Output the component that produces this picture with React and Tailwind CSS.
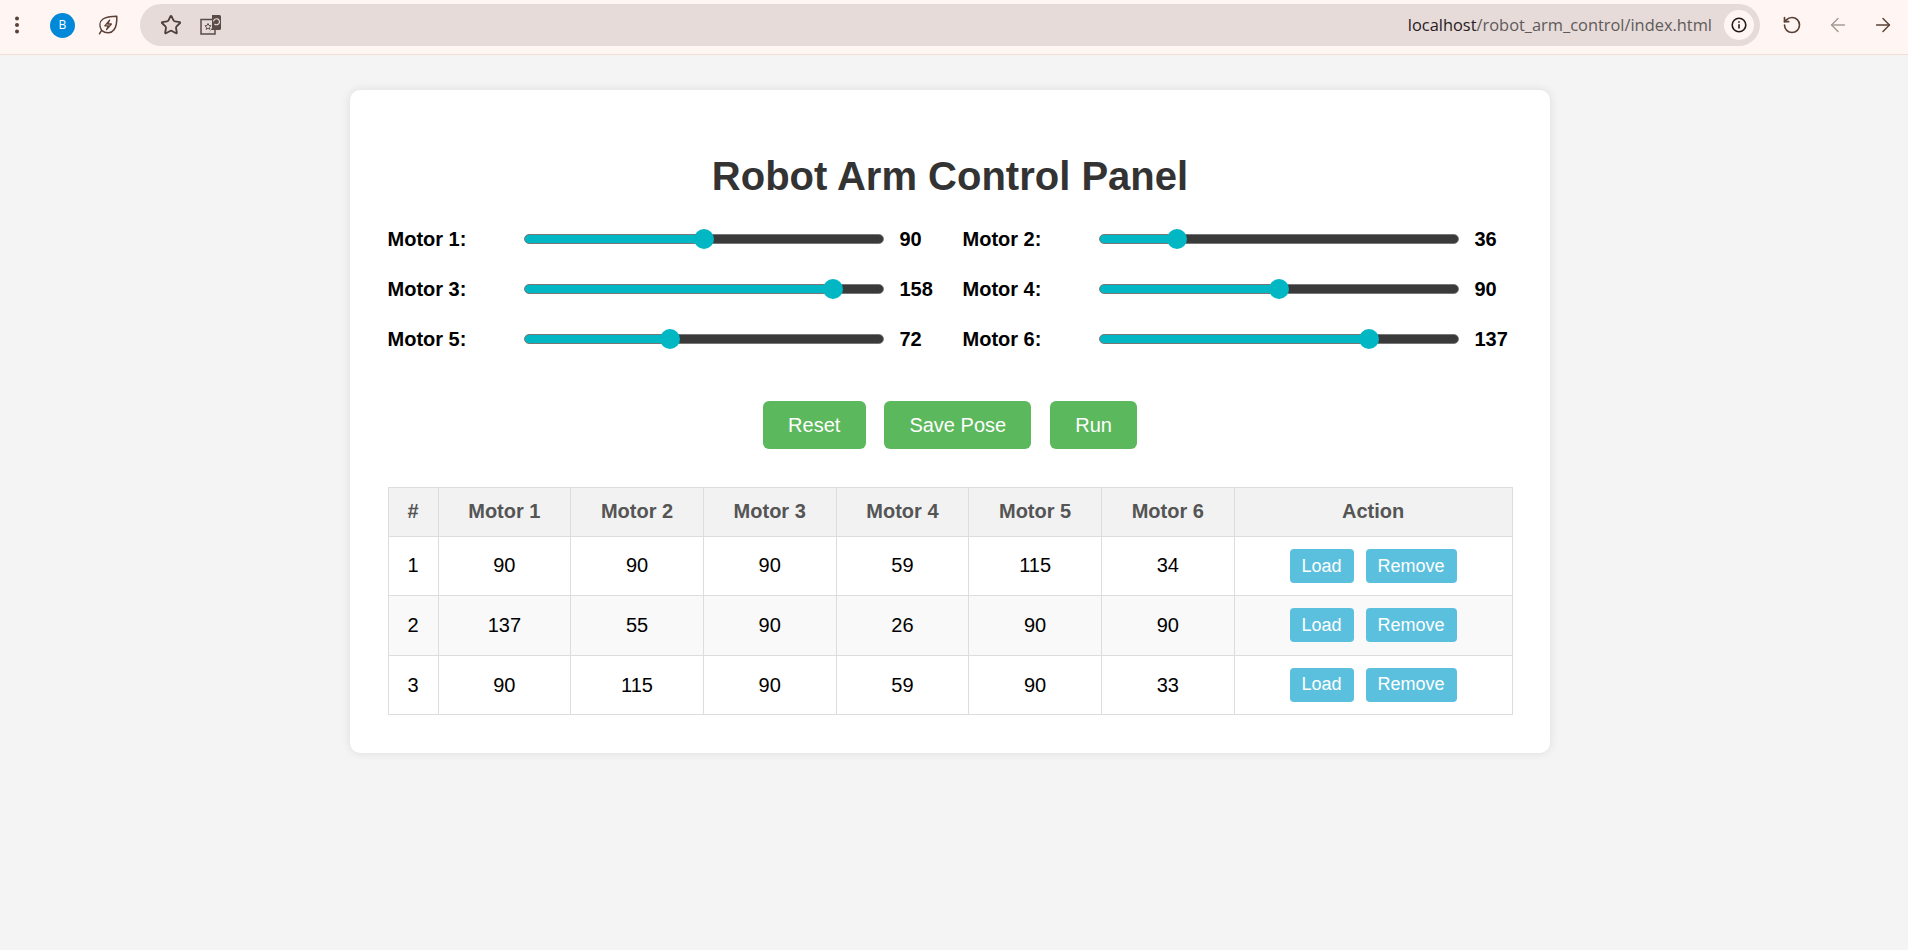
import React from 'react';
import { ArrowLeft, ArrowRight, RotateCcw, Star } from 'lucide-react';

const motors = [
  { id: 1, value: 90, pos: 90 },
  { id: 2, value: 36, pos: 36 },
  { id: 3, value: 158, pos: 159 },
  { id: 4, value: 90, pos: 90 },
  { id: 5, value: 72, pos: 72 },
  { id: 6, value: 137, pos: 138 },
];

const poses = [
  [90, 90, 90, 59, 115, 34],
  [137, 55, 90, 26, 90, 90],
  [90, 115, 90, 59, 90, 33],
];

const MotorRow = ({ id, value, pos }) => {
  const thumb = 10 + (pos / 180) * 338;
  return (
    <div className="flex items-center h-[20px] text-[20px] font-bold text-black">
      <label className="w-[136px] shrink-0">Motor {id}:</label>
      <input
        type="range"
        min="0"
        max="180"
        defaultValue={pos}
        style={{ background: `linear-gradient(to right, #00b7c3 ${thumb}px, #3a3a3a ${thumb}px)` }}
        className="w-[360px] h-[10px] shrink-0 appearance-none rounded-[5px] border border-[#777777] [&::-webkit-slider-thumb]:appearance-none [&::-webkit-slider-thumb]:w-[20px] [&::-webkit-slider-thumb]:h-[20px] [&::-webkit-slider-thumb]:rounded-full [&::-webkit-slider-thumb]:bg-[#00b7c3]"
      />
      <span className="ml-[16px]">{value}</span>
    </div>
  );
};

const Toolbar = () => (
  <div className="h-[55px] pb-[4px] shrink-0 flex items-center bg-[#fff6f3] border-b border-[#f6ddd3] text-[#5b4035]">
    <div className="w-[140px] flex items-center shrink-0">
      <svg width="6" height="20" viewBox="0 0 6 20" className="ml-[14px]" fill="currentColor">
        <circle cx="3" cy="3.5" r="2" />
        <circle cx="3" cy="10" r="2" />
        <circle cx="3" cy="16.5" r="2" />
      </svg>
      <div className="ml-[30px] w-[25px] h-[25px] rounded-full bg-[#0288d8] text-white text-[12px] flex items-center justify-center font-['Open_Sans',sans-serif]">
        B
      </div>
      <svg width="20" height="20" viewBox="0 0 20 20" fill="none" stroke="currentColor" strokeWidth="1.5" className="ml-[23px]">
        <path d="M1.5 18.8 3.6 15.4C1 11 1.5 6.5 5 4 8.5 1.5 13 1.2 18.8 1.2 19 7 18.4 11.5 16 14.8 13.2 18.5 8 19 3.6 15.4" strokeLinejoin="round" strokeLinecap="round" />
        <path d="M11.6 5.2 6.8 10.8h3.6L8.6 14.6 13.4 9h-3.6z" strokeLinejoin="round" strokeWidth="1.3" />
      </svg>
    </div>
    <div className="flex-1 h-[42px] rounded-full bg-[#e6dbd9] flex items-center">
      <Star size={22} strokeWidth={2} className="ml-[20px] text-[#4e3f3a]" />
      <svg width="22" height="22" viewBox="0 0 22 22" className="ml-[18px]">
        <rect x="1" y="5.5" width="14" height="14.5" fill="none" stroke="#5b4b46" strokeWidth="1.5" />
        <path d="M12 1h7.5A1.5 1.5 0 0 1 21 2.5v12a1.5 1.5 0 0 1-1.5 1.5H11L8 20l4-6z" fill="#5b4b46" />
        <path d="M13.5 7.5a3 3 0 1 1 1 2.5" fill="none" stroke="#e6dbd9" strokeWidth="1.2" />
        <path d="M8 9.5l1 2 2 .3-1.5 1.5.3 2-1.8-1-1.8 1 .3-2L5 11.8l2-.3z" fill="none" stroke="#5b4b46" strokeWidth="1" />
      </svg>
      <div className="ml-auto text-[16.4px] text-[#5f5a5a] font-['Open_Sans',sans-serif]">
        <span className="text-[#27201e]">localhost</span>/robot_arm_control/index.html
      </div>
      <div className="ml-[12px] mr-[6px] w-[30px] h-[30px] rounded-full bg-[#fff6f3] flex items-center justify-center">
        <svg width="18" height="18" viewBox="0 0 18 18" fill="none" stroke="#201a18" strokeWidth="1.6">
          <circle cx="9" cy="9" r="6.8" />
          <path d="M9 8.2v4.2M9 5.2v1.6" />
        </svg>
      </div>
    </div>
    <div className="w-[148px] shrink-0 flex items-center">
      <RotateCcw size={20} strokeWidth={2} className="ml-[22px]" />
      <ArrowLeft size={22} strokeWidth={1.6} className="ml-[25px] text-[#a89a94]" />
      <ArrowRight size={22} strokeWidth={1.6} className="ml-[23px]" />
    </div>
  </div>
);

const App = () => {
  return (
    <div className="min-h-[950px] flex flex-col bg-[#f4f4f4] font-['Liberation_Sans',Arial,sans-serif]">
      <Toolbar />
      <div className="pt-[35px] pl-[350px]">
        <div className="w-[1200px] h-[663px] px-[37.5px] pt-[63px] bg-white rounded-[10px] shadow-[0_0_10px_rgba(0,0,0,0.1)]">
          <h1 className="text-[40px] leading-[46px] font-bold text-[#333333] text-center">Robot Arm Control Panel</h1>

          <div className="mt-[30px] grid grid-cols-2 gap-x-[25px] gap-y-[30px]">
            {motors.map((m) => (
              <MotorRow key={m.id} id={m.id} value={m.value} pos={m.pos} />
            ))}
          </div>

          <div className="mt-[52px] flex justify-center gap-[18.5px]">
            {['Reset', 'Save Pose', 'Run'].map((label) => (
              <button key={label} className="h-[48px] px-[25.3px] rounded-[6px] bg-[#5cb85c] text-white text-[20px]">
                {label}
              </button>
            ))}
          </div>

          <table className="mt-[38px] w-[1125px] table-fixed border-collapse text-[20px] text-black text-center">
            <thead>
              <tr className="h-[49px] bg-[#f2f2f2] text-[#555555]">
                <th className="w-[50px] pb-[2px] border border-[#dddddd] font-bold">#</th>
                {[1, 2, 3, 4, 5, 6].map((n) => (
                  <th key={n} className="w-[132.7px] pb-[2px] border border-[#dddddd] font-bold">Motor {n}</th>
                ))}
                <th className="pb-[2px] border border-[#dddddd] font-bold">Action</th>
              </tr>
            </thead>
            <tbody>
              {poses.map((row, i) => (
                <tr key={i} className="h-[59.3px] even:bg-[#f9f9f9]">
                  <td className={i === 0 ? 'pb-[2px] border border-[#dddddd]' : 'border border-[#dddddd]'}>{i + 1}</td>
                  {row.map((v, j) => (
                    <td key={j} className={i === 0 ? 'pb-[2px] border border-[#dddddd]' : 'border border-[#dddddd]'}>{v}</td>
                  ))}
                  <td className="border border-[#dddddd]">
                    <div className="flex justify-center gap-[12px]">
                      <button className="h-[34px] px-[12px] rounded-[4px] bg-[#5bc0de] text-white text-[18px]">Load</button>
                      <button className="h-[34px] px-[12px] rounded-[4px] bg-[#5bc0de] text-white text-[18px]">Remove</button>
                    </div>
                  </td>
                </tr>
              ))}
            </tbody>
          </table>
        </div>
      </div>
    </div>
  );
};

export default App;
